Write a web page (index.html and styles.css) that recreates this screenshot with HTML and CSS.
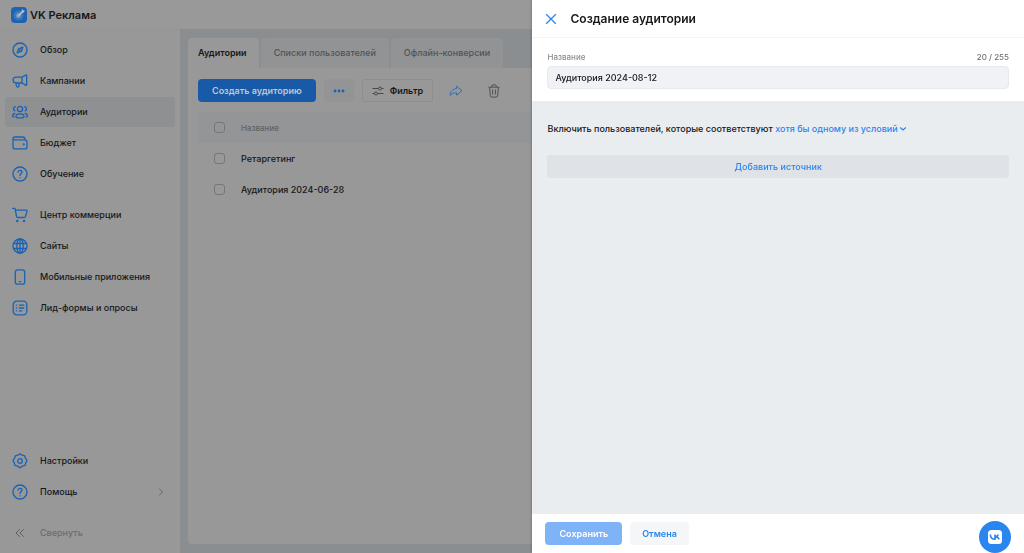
FILE: index.html
```html
<!DOCTYPE html>
<html lang="ru">
<head>
<meta charset="utf-8">
<meta name="viewport" content="width=device-width, initial-scale=1">
<title>VK Реклама</title>
<link rel="stylesheet" href="styles.css">
</head>
<body>
<div class="app">
  <header class="topbar">
    <svg class="logo" viewBox="0 0 16 16"><rect width="16" height="16" rx="4" fill="#1c63b3"/><circle cx="7.5" cy="8.5" r="5" fill="#3a78ba"/><circle cx="7.5" cy="8.5" r="2.6" fill="#6b93bf"/><path d="M7.3 8.8 12 4.2" stroke="#b4bcc5" stroke-width="1.8" stroke-linecap="round"/><path d="m10.6 4.5.6-2.4 1.2 1.3 1.6.2-1.3 2-1.7.4z" fill="#b4bcc5"/></svg>
    <span class="brand">VK Реклама</span>
  </header>
  <div class="body">
    <nav class="sidebar">
      <a class="item" href="#"><svg class="icon" viewBox="0 0 16 16"><circle cx="8" cy="8" r="7"/><path d="M10.8 5.2 9.4 9.2 5.2 10.8 6.6 6.8z"/><path d="m7.6 8.4.8-.8"/></svg>Обзор</a>
      <a class="item" href="#"><svg class="icon" viewBox="0 0 16 16"><path d="M10 4.2H4a2.9 2.9 0 0 0 0 5.8h6M10 4.2l3.6-2.1c.6-.3 1.1 0 1.1.6v8.8c0 .6-.5.9-1.1.6L10 10zM3.8 10l.7 3.2c.3 1.2 2.5 1.1 2.5-.2V10"/></svg>Кампании</a>
      <a class="item item-active" href="#"><svg class="icon" viewBox="0 0 16 16"><circle cx="8" cy="5" r="2.6"/><path d="M8 9.8c2.5 0 4 1 4 2.4 0 1-.6 1.6-1.6 1.6H5.6c-1 0-1.6-.6-1.6-1.6 0-1.4 1.5-2.4 4-2.4zM3.3 2.7a2.2 2.2 0 0 0-.5 4.1M12.7 2.7a2.2 2.2 0 0 1 .5 4.1M2.8 9.5C1.2 9.7.6 10.6.6 11.6c0 .8.5 1.3 1.4 1.3M13.2 9.5c1.6.2 2.2 1.1 2.2 2.1 0 .8-.5 1.3-1.4 1.3"/></svg>Аудитории</a>
      <a class="item" href="#"><svg class="icon" viewBox="0 0 16 16"><path d="M1 4v7.700c0 1.400.8 2.200 2.200 2.200h9.600c1.400 0 2.200-.8 2.200-2.200V7c0-1.400-.8-2.200-2.200-2.200H2.600C.5 4.800.5 2 2.600 2h8.200c1.400 0 2.100.8 2.100 2.200v.6"/><circle cx="11.700" cy="9.400" r=".4"/></svg>Бюджет</a>
      <a class="item" href="#"><svg class="icon" viewBox="0 0 16 16"><circle cx="8" cy="8" r="7"/><path d="M6 6.200c.2-2.600 4-2.500 4-.1C10 7.600 8 7.600 8 9.400M8 11.600v.2"/></svg>Обучение</a>
      <a class="item item-gap" href="#"><svg class="icon" viewBox="0 0 16 16"><path d="M.6 1.300h1.600c.6 0 .9.300 1 .9l1.300 7.200c.1.700.5 1.100 1.200 1.100h6.500c.7 0 1.100-.4 1.300-1l1.500-5.400c.2-.6-.1-.9-.7-.9H3.600"/><circle cx="5.300" cy="13.900" r=".6"/><circle cx="12" cy="13.900" r=".6"/></svg>Центр коммерции</a>
      <a class="item" href="#"><svg class="icon" viewBox="0 0 16 16"><circle cx="8" cy="8" r="7"/><ellipse cx="8" cy="8" rx="3.200" ry="7"/><path d="M1.700 5.500h12.600M1.700 10.500h12.600M8 1v14"/></svg>Сайты</a>
      <a class="item" href="#"><svg class="icon" viewBox="0 0 16 16"><rect x="3.300" y=".8" width="9.400" height="14.400" rx="2.200"/><path d="M7.300 12.700h1.400"/></svg>Мобильные приложения</a>
      <a class="item" href="#"><svg class="icon" viewBox="0 0 16 16"><rect x="1.200" y="1.200" width="13.600" height="13.600" rx="3.500"/><path d="M7.300 5.200h4.500M7.300 8h4.500M7.300 10.800h2.500M4.300 5.200h.3M4.300 8h.3M4.300 10.800h.3"/></svg>Лид-формы и опросы</a>
      <a class="item item-bottom" href="#"><svg class="icon" viewBox="0 0 16 16"><path d="M6.800 1.500Q8 .4 9.200 1.500l.8.700 1.600.1q1.500.3 1.500 1.800l.3 1.200 1 1.100q.9 1.200 0 2.400l-.8 1.100-.1 1.400q-.3 1.500-1.800 1.600l-1.400.2-1.200 1q-1.100.8-2.200 0l-1.200-1-1.400-.2q-1.500-.1-1.800-1.600l-.1-1.400-.8-1.100q-.9-1.200 0-2.400l1-1.100.3-1.200q0-1.500 1.500-1.800l1.600-.1z"/><circle cx="8" cy="8" r="2.300"/></svg>Настройки</a>
      <a class="item" href="#"><svg class="icon" viewBox="0 0 16 16"><circle cx="8" cy="8" r="7"/><path d="M6 6.200c.2-2.600 4-2.500 4-.1C10 7.600 8 7.600 8 9.400M8 11.600v.2"/></svg>Помощь<svg class="chevron" viewBox="0 0 6 10"><path d="m1.200 1.500 3.300 3.500-3.300 3.500"/></svg></a>
      <button class="item item-gap item-muted" type="button"><svg class="icon" viewBox="0 0 16 16"><path d="M7.500 4.500 4 8l3.500 3.500M11.500 4.500 8 8l3.500 3.500"/></svg>Свернуть</button>
    </nav>
    <main class="content">
      <div class="tabs">
        <a class="tab tab-active" href="#">Аудитории</a>
        <a class="tab" href="#">Списки пользователей</a>
        <a class="tab" href="#">Офлайн-конверсии</a>
      </div>
      <section class="card">
        <div class="tools">
          <button class="btn btn-create" type="button">Создать аудиторию</button>
          <button class="btn btn-more" type="button" aria-label="Ещё"><svg width="12" height="4" viewBox="0 0 12 4"><circle cx="2" cy="2" r="1.400"/><circle cx="6" cy="2" r="1.400"/><circle cx="10" cy="2" r="1.400"/></svg></button>
          <button class="btn btn-filter" type="button"><svg width="12" height="10" viewBox="0 0 12 10"><path d="M.5 2.500h6M9.500 2.500h2M.5 7.500h2M5.500 7.500h6"/><circle cx="8" cy="2.500" r="1.500"/><circle cx="4" cy="7.500" r="1.500"/></svg>Фильтр</button>
          <button class="btn btn-icon share" type="button" aria-label="Поделиться"><svg width="14" height="14" viewBox="0 0 14 14"><path d="M7.600 2.200 13 6.700l-5.400 4.500V8.900C5 8.600 3 9.400 1 11.500c0-3.600 2.600-6.600 6.600-7z"/></svg></button>
          <button class="btn btn-icon trash" type="button" aria-label="Удалить"><svg width="14" height="14" viewBox="0 0 14 14"><path d="M1.500 3.200h11M4.800 3V1.800c0-.6.300-.9.900-.9h2.600c.6 0 .9.300.9.900V3M2.600 3.200l.7 8.500c.1.900.6 1.400 1.500 1.400h4.400c.9 0 1.400-.5 1.500-1.400l.7-8.500M5.500 5.500l.2 5M8.500 5.500l-.2 5"/></svg></button>
        </div>
        <table class="table">
          <thead>
            <tr><th class="pick"><input class="check" type="checkbox" aria-label="Выбрать все"></th><th>Название</th></tr>
          </thead>
          <tbody>
            <tr><td class="pick"><input class="check" type="checkbox" id="row-1"></td><td><label for="row-1">Ретаргетинг</label></td></tr>
            <tr><td class="pick"><input class="check" type="checkbox" id="row-2"></td><td><label for="row-2">Аудитория 2024-06-28</label></td></tr>
          </tbody>
        </table>
      </section>
    </main>
  </div>
</div>

<aside class="drawer" role="dialog" aria-labelledby="drawer-title">
  <header class="drawer-head">
    <button class="close" type="button" aria-label="Закрыть"><svg width="12" height="12" viewBox="0 0 12 12"><path d="m1.200 1.200 9.600 9.600M10.800 1.200l-9.600 9.600"/></svg></button>
    <h1 class="drawer-title" id="drawer-title">Создание аудитории</h1>
  </header>
  <div class="name-block">
    <div class="name-row"><label for="name">Название</label><span class="count">20 / 255</span></div>
    <input class="name-input" id="name" type="text" value="Аудитория 2024-08-12">
  </div>
  <div class="rules">
    <p class="rule">Включить пользователей, которые соответствуют <button class="rule-link" type="button">хотя бы одному из условий<svg width="8" height="6" viewBox="0 0 8 6"><path d="m1.200 1.500 2.800 2.500 2.800-2.500"/></svg></button></p>
    <button class="add" type="button">Добавить источник</button>
  </div>
  <footer class="drawer-foot">
    <button class="btn btn-save" type="button">Сохранить</button>
    <button class="btn btn-cancel" type="button">Отмена</button>
  </footer>
  <button class="chat" type="button" aria-label="VK"><svg width="16" height="16" viewBox="0 0 16 16"><rect x="1" y="1" width="14" height="14" rx="3.500" fill="#fff"/><path d="M3.300 5.500c.2 3 1.600 4.800 4.700 4.800V5.500M8 7.900c1.800-.2 2.900-1 3.400-2.400M8.700 7.900c1.700.1 2.900 1 3.500 2.500" fill="none" stroke="#2a86ee" stroke-width="1.600"/></svg></button>
</aside>
</body>
</html>
```

FILE: styles.css
```css
* { box-sizing: border-box; }

body {
  margin: 0;
  font-family: Inter, "Open Sans", sans-serif;
  font-size: 9px;
  font-weight: 500;
  line-height: 12px;
  color: #15171a;
  background: #8b8e90;
}

button, input { font: inherit; color: inherit; margin: 0; }
button { border: 0; padding: 0; background: none; cursor: pointer; }
a { color: inherit; text-decoration: none; }
svg { flex: none; }

.app { display: flex; flex-direction: column; height: 100vh; }

.topbar {
  display: flex;
  align-items: center;
  gap: 3px;
  height: 29px;
  padding: 0 11px;
  background: #999999;
}
.logo { width: 16px; height: 16px; }
.brand { font-size: 11px; font-weight: 600; }

.body { display: flex; flex: 1; min-height: 0; }

.sidebar {
  display: flex;
  flex-direction: column;
  gap: 1px;
  width: 180px;
  padding: 5px;
  background: #989898;
  border-top: 1px solid #94969a;
}
.item {
  display: flex;
  align-items: center;
  gap: 12px;
  flex: none;
  height: 30px;
  padding: 0 11px 0 7px;
  border-radius: 4px;
  text-align: left;
}
.item-active { background: #8f9092; }
.item-gap { margin-top: 10px; }
.item-bottom { margin-top: auto; }
.item-muted { color: #6a6d70; }
.icon {
  width: 16px;
  height: 16px;
  fill: none;
  stroke: #1962b4;
  stroke-width: 1.3;
  stroke-linecap: round;
  stroke-linejoin: round;
}
.item-muted .icon { stroke: #5c5f63; stroke-width: 1; }
.chevron { width: 6px; height: 10px; margin-left: auto; fill: none; stroke: #66696d; }

.content {
  display: flex;
  flex-direction: column;
  flex: 1;
  padding: 9px 8px;
}
.tabs { display: flex; gap: 2px; }
.tab {
  display: flex;
  align-items: center;
  height: 30px;
  padding: 0 13px;
  border-radius: 4px 4px 0 0;
  background: #929394;
  color: #505356;
}
.tab-active {
  padding: 0 12px 0 10px;
  background: #989898;
  color: #15171a;
  font-weight: 600;
}
.card {
  flex: 1;
  padding: 11px 10px;
  background: #989898;
  border-radius: 0 0 4px 4px;
}
.tools { display: flex; align-items: center; gap: 8px; margin-bottom: 10px; }
.btn {
  display: flex;
  align-items: center;
  justify-content: center;
  height: 23px;
  border-radius: 4px;
}
.btn-create { padding: 0 14px; background: #1859a8; color: #c1c8d0; font-weight: 600; }
.btn-more { width: 30px; background: #939495; fill: #1962b4; }
.btn-filter {
  gap: 6px;
  padding: 0 9px;
  border: 1px solid #8d8e90;
  border-radius: 2px;
  font-weight: 600;
}
.btn-filter svg { fill: none; stroke: #46494c; }
.btn-icon { width: 30px; fill: none; }
.share { stroke: #2f6fb8; }
.trash { stroke: #4e5154; }

.table { width: 100%; border-collapse: collapse; text-align: left; }
.table th, .table td { height: 31px; padding: 0; }
.table th { background: #949596; color: #606366; font-size: 8px; font-weight: 500; }
.table .pick { width: 43px; padding-left: 16px; }
.check {
  display: block;
  appearance: none;
  width: 11px;
  height: 11px;
  border: 1px solid #747679;
  border-radius: 3px;
}

.drawer {
  position: fixed;
  top: 0;
  right: 0;
  bottom: 0;
  display: flex;
  flex-direction: column;
  width: 48%;
  background: #ffffff;
  box-shadow: 0 0 3px rgba(0, 0, 0, 0.3);
}
.drawer-head {
  display: flex;
  align-items: center;
  gap: 13px;
  height: 38px;
  padding: 0 13px;
  border-bottom: 1px solid #f3f4f6;
}
.close { display: flex; fill: none; stroke: #2a86ee; stroke-width: 1.3; }
.drawer-title { margin: 0; font-size: 12px; font-weight: 600; line-height: 16px; }
.name-block { padding: 13px 15px 12px; }
.name-row {
  display: flex;
  justify-content: space-between;
  margin-bottom: 3px;
  font-size: 8px;
  line-height: 12px;
  color: #8b8e92;
}
.count { color: #6d7074; }
.name-input {
  display: block;
  width: 100%;
  height: 23px;
  padding: 0 7px;
  border: 1px solid #e6e9ee;
  border-radius: 4px;
  background: #f1f2f5;
}
.rules { flex: 1; padding: 22px 15px; background: #e9edf0; }
.rule { margin: 0 0 20px; }
.rule-link {
  display: inline-flex;
  align-items: center;
  gap: 1px;
  color: #2a86ee;
  fill: none;
}
.rule-link svg { stroke: #2a86ee; stroke-width: 1.2; }
.add {
  display: block;
  width: 100%;
  height: 23px;
  border-radius: 2px;
  background: #dfe3e7;
  color: #2a86ee;
}
.drawer-foot { display: flex; gap: 8px; padding: 8px 13px; }
.btn-save { padding: 0 14px; background: #7fb3f8; color: #ffffff; font-weight: 600; }
.btn-cancel { padding: 0 12px; background: #f5f6f8; color: #2a86ee; font-weight: 600; }
.chat {
  position: absolute;
  right: 13px;
  bottom: 0;
  display: flex;
  align-items: center;
  justify-content: center;
  width: 32px;
  height: 32px;
  border-radius: 50%;
  background: #2a86ee;
}
```
